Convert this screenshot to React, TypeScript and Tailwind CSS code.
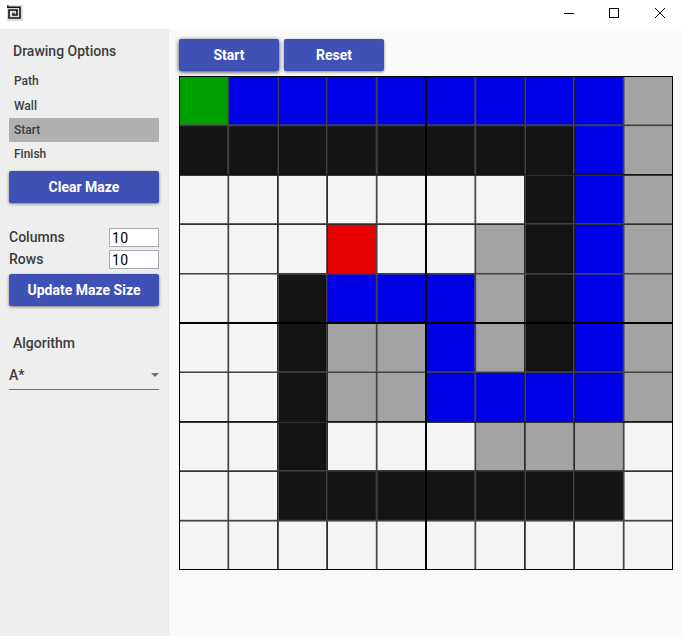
import React from "react";

const COLORS: Record<string, string> = {
  G: "#00a000",
  B: "#0000e6",
  K: "#141414",
  W: "#f4f4f4",
  R: "#e60000",
  V: "#a3a3a3",
};

const MAZE = [
  "GBBBBBBBBV",
  "KKKKKKKKBV",
  "WWWWWWWKBV",
  "WWWRWWVKBV",
  "WWKBBBVKBV",
  "WWKVVBVKBV",
  "WWKVVBBBBV",
  "WWKWWWVVVW",
  "WWKKKKKKKW",
  "WWWWWWWWWW",
];

const CELL = 49.3;

type Strip = [offset: number, color: string, alpha: number];

// One-pixel strips that make up the antialiased inner grid lines.
const COLUMNS: Strip[] = [
  [48, "#505050", 0.6], [49, "#404040", 0.97], [50, "#505050", 0.2],
  [98, "#262626", 0.97], [99, "#484848", 0.9],
  [147, "#484848", 0.9], [148, "#262626", 0.97],
  [196, "#505050", 0.2], [197, "#404040", 0.97], [198, "#505050", 0.6],
  [295, "#505050", 0.6], [296, "#404040", 0.97], [297, "#505050", 0.2],
  [345, "#262626", 0.97], [346, "#484848", 0.9],
  [394, "#484848", 0.9], [395, "#262626", 0.97],
  [443, "#505050", 0.2], [444, "#404040", 0.97], [445, "#505050", 0.6],
];

const ROWS: Strip[] = [
  [48, "#505050", 0.6], [49, "#404040", 0.97], [50, "#505050", 0.15],
  [98, "#161414", 0.98], [99, "#322e2e", 0.96],
  [147, "#484848", 0.85], [148, "#2c2c2c", 0.97],
  [197, "#404040", 0.97], [198, "#505050", 0.6],
  [246, "#000000", 1], [247, "#000000", 1],
  [295, "#505050", 0.6], [296, "#404040", 0.97],
  [345, "#161414", 0.98], [346, "#322e2e", 0.96],
  [394, "#484848", 0.8], [395, "#2c2c2c", 0.97],
  [443, "#505050", 0.2], [444, "#404040", 0.97], [445, "#505050", 0.6],
];

function Maze() {
  return (
    <svg width="494" height="494" viewBox="0 0 494 494" className="block" shapeRendering="crispEdges">
      {MAZE.map((row, r) =>
        row.split("").map((c, i) => {
          const x = Math.floor(0.5 + i * CELL);
          const y = Math.floor(0.5 + r * CELL);
          return (
            <rect
              key={`${r}-${i}`}
              x={x}
              y={y}
              width={Math.floor(0.5 + (i + 1) * CELL) - x}
              height={Math.floor(0.5 + (r + 1) * CELL) - y}
              fill={COLORS[c]}
            />
          );
        }),
      )}
      {COLUMNS.map(([at, color, alpha]) => (
        <rect key={`c${at}`} x={at} y="0" width="1" height="494" fill={color} fillOpacity={alpha} />
      ))}
      {ROWS.map(([at, color, alpha]) => (
        <rect key={`r${at}`} x="0" y={at} width="494" height="1" fill={color} fillOpacity={alpha} />
      ))}
      <rect x="246" y="0" width="2" height="494" fill="#000" />
      <rect x="0.5" y="0.5" width="493" height="493" fill="none" stroke="#000" />
    </svg>
  );
}

function Button({ children, className = "" }: { children: React.ReactNode; className?: string }) {
  return (
    <button
      className={`h-8 rounded-[2px] bg-[#3f51b5] text-center text-sm font-bold text-white ${className}`}
    >
      {children}
    </button>
  );
}

const RAISED = "shadow-[0_1px_3px_rgba(0,0,0,0.5)]";
const FOCUSED = "shadow-[0_1px_4px_rgba(0,0,0,0.8)]";

function Field({ label }: { label: string }) {
  return (
    <label className="flex h-[22px] items-center justify-between text-sm font-medium">
      {label}
      <input
        defaultValue="10"
        className="h-[19px] w-[50px] border border-[#a9a9b3] bg-white px-[2px] pt-px text-sm font-normal tracking-[0.4px] text-black outline-none"
      />
    </label>
  );
}

export default function App() {
  return (
    <div className="flex h-[636px] w-[682px] flex-col overflow-hidden bg-[#fafafa] font-['Roboto',sans-serif] text-[#3c3c3c]">
      <header className="flex h-[29px] shrink-0 items-start justify-between bg-white">
        <svg width="16" height="16" className="mt-[5px] ml-[7px]" viewBox="0 0 16 16">
          <rect width="16" height="16" fill="#dcdcdc" />
          <path d="M0 2.3H13V13H2V5H10V10H6V8" fill="none" stroke="#141414" strokeWidth="1.6" />
          <rect width="1.5" height="2" fill="#087a08" />
          <rect x="6.5" y="7.5" width="1.5" height="1.5" fill="#d64040" />
        </svg>
        <svg width="120" height="29" viewBox="562 0 120 29" fill="none" stroke="#000">
          <path d="M564 13.5h10" />
          <rect x="609.5" y="8.5" width="9" height="9" />
          <path d="M655 8l10 10M665 8l-10 10" />
        </svg>
      </header>
      <div className="flex flex-1">
        <aside className="w-[169px] bg-[#eeeeee] pr-[10px] pl-[9px]">
          <h2 className="ml-1 pt-[12px] text-sm leading-5 font-medium">Drawing Options</h2>
          <ul className="mt-2 text-xs leading-6 font-medium">
            <li className="h-[25px] pl-[5px]">Path</li>
            <li className="h-6 pl-[5px]">Wall</li>
            <li className="h-6 bg-[#b0b0b0] pl-[5px]">Start</li>
            <li className="h-6 pl-[5px]">Finish</li>
          </ul>
          <Button className={`mt-[5px] w-[150px] ${RAISED}`}>Clear Maze</Button>
          <div className="mt-[23px] mb-[4px]">
            <Field label="Columns" />
            <Field label="Rows" />
          </div>
          <Button className={`block w-[150px] ${RAISED}`}>Update Maze Size</Button>
          <h2 className="mt-[27px] ml-1 text-sm leading-5 font-medium">Algorithm</h2>
          <div className="mt-[8px] flex h-[29px] items-center justify-between border-b border-[#707070] text-sm font-medium">
            A*
            <span className="h-0 w-0 border-x-4 border-t-4 border-x-transparent border-t-[#707070]" />
          </div>
        </aside>
        <main className="pt-[10px] pl-[10px]">
          <div className="mb-[5px] flex gap-[5px]">
            <Button className={`w-[100px] ${FOCUSED}`}>Start</Button>
            <Button className={`w-[100px] ${RAISED}`}>Reset</Button>
          </div>
          <Maze />
        </main>
      </div>
    </div>
  );
}
